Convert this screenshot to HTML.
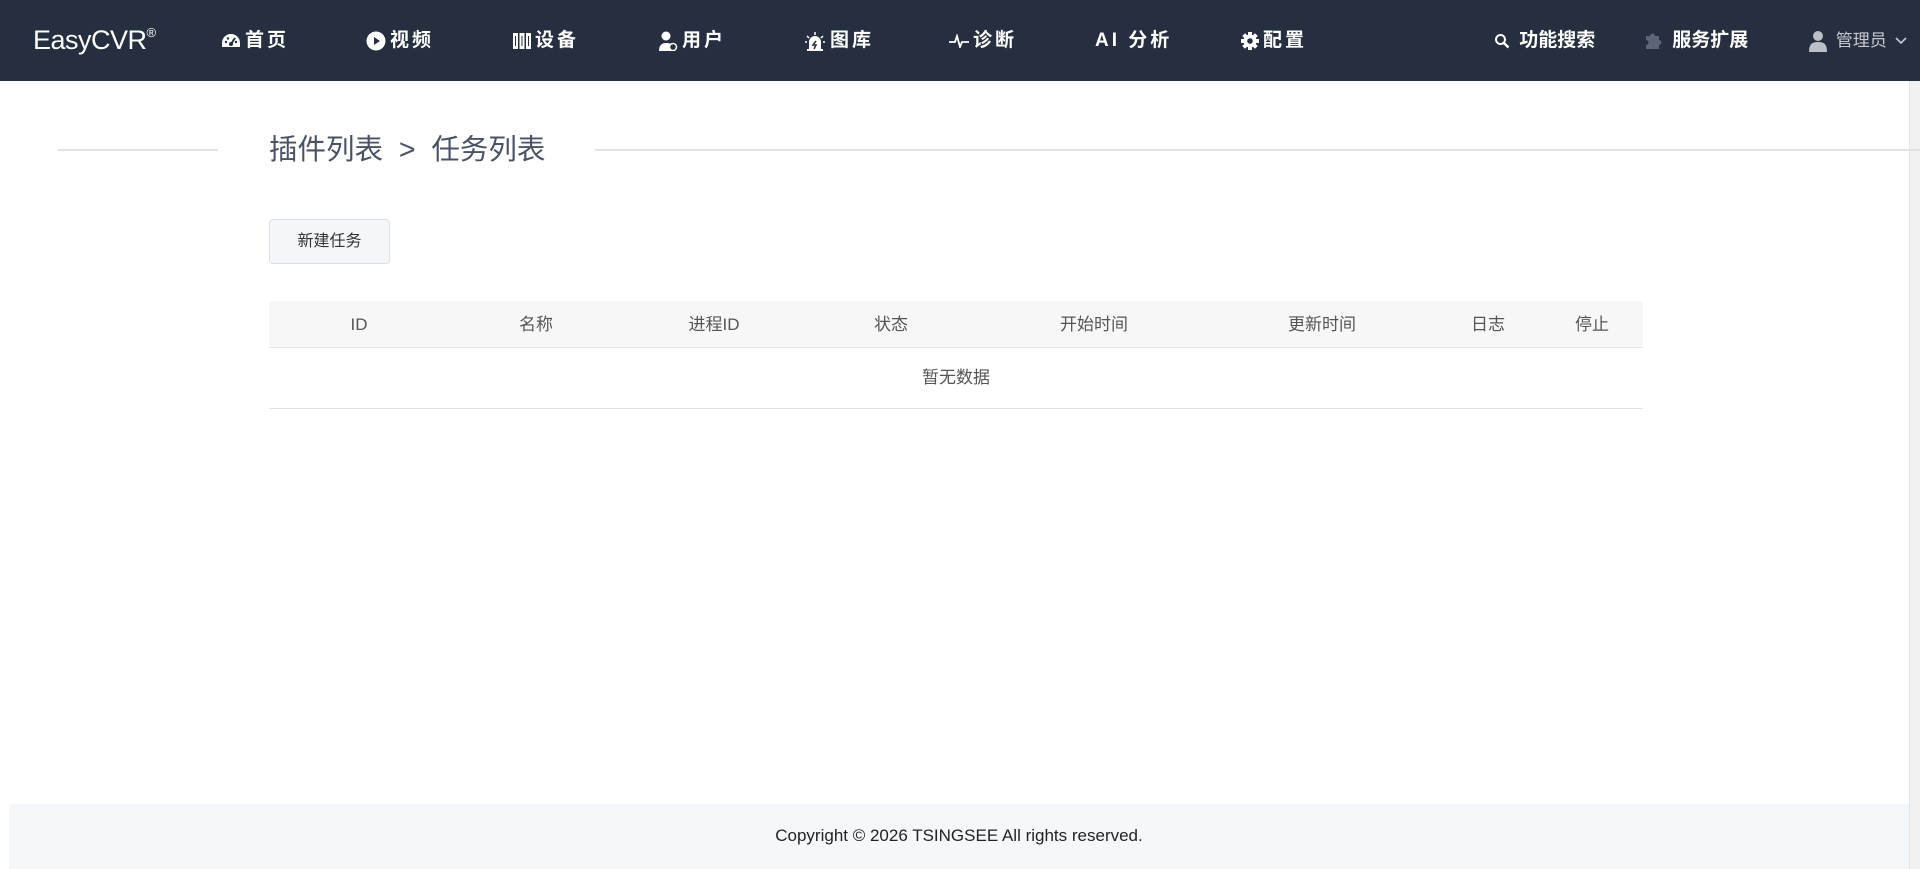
<!DOCTYPE html>
<html><head><meta charset="utf-8"><style>
*{margin:0;padding:0;box-sizing:border-box}
body{width:1920px;height:869px;background:#fff;font-family:"Liberation Sans","Noto Sans CJK SC",sans-serif;position:relative;overflow:hidden}
.hd{position:absolute;left:0;top:0;width:1920px;height:81px;background:#262f3f;color:#fff}
.hd .a{position:absolute;top:0;height:81px;line-height:81px;font-size:19px;font-weight:bold;white-space:nowrap;display:flex;align-items:center;gap:4px;letter-spacing:3px}
.logo{position:absolute;left:33px;top:0;line-height:81px;font-size:27px;color:#fff;letter-spacing:-0.5px}
.logo sup{font-size:13px;vertical-align:top;position:relative;top:-8px}
svg{display:block}
.sb{position:absolute;right:0;top:81px;width:11px;height:788px;background:#f1f1f1;border-left:1px solid #e6e6e6}
.bc{position:absolute;left:269px;top:130px;font-size:28.5px;color:#4a5366;line-height:40px;white-space:nowrap}
.ln{position:absolute;top:149px;height:2px;background:#e2e2e2}
.btn{position:absolute;left:269px;top:219px;width:121px;height:45px;border:1px solid #dcdfe6;border-radius:4px;background:#f4f6f9;font-size:16px;color:#333;text-align:center;line-height:43px}
.th{position:absolute;left:269px;top:301px;width:1374px;height:47px;background:#f7f7f7;border-bottom:1px solid #e6e6e6}
.th span{position:absolute;top:0;line-height:47px;font-size:17px;color:#555;transform:translateX(-50%);white-space:nowrap}
.em{position:absolute;left:269px;top:348px;width:1374px;height:61px;border-bottom:1px solid #e2e2e2;text-align:center;line-height:60px;font-size:17px;color:#555}
.ft{position:absolute;left:9px;top:804px;width:1900px;height:65px;background:#f5f8fb;text-align:center;line-height:64px;font-size:17px;color:#222}
</style></head><body>
<div class="hd">
<div class="logo">EasyCVR<sup>®</sup></div>
<div class="a" style="left:221px"><svg width="20" height="16" viewBox="0 0 20 16"><path d="M10 1A9 9 0 0 0 1 10v4h18v-4A9 9 0 0 0 10 1z" fill="#fff"/><circle cx="10" cy="11" r="2" fill="#262f3f"/><path d="M10 11L14 5" stroke="#262f3f" stroke-width="2"/><circle cx="5" cy="9" r="1.2" fill="#262f3f"/><circle cx="7" cy="5.5" r="1.2" fill="#262f3f"/><circle cx="15" cy="9" r="1.2" fill="#262f3f"/></svg>首页</div>
<div class="a" style="left:366px"><svg width="20" height="20" viewBox="0 0 20 20"><circle cx="10" cy="10" r="9.5" fill="#fff"/><path d="M8 6v8l6-4z" fill="#262f3f"/></svg>视频</div>
<div class="a" style="left:513px"><svg width="18" height="16" viewBox="0 0 18 16"><rect x="0" y="0" width="5" height="16" fill="#fff"/><rect x="6.5" y="0" width="5" height="16" fill="#fff"/><rect x="13" y="0" width="5" height="16" fill="#fff"/><rect x="2" y="3" width="1" height="10" fill="#262f3f"/><rect x="8.5" y="3" width="1" height="10" fill="#262f3f"/><rect x="15" y="3" width="1" height="10" fill="#262f3f"/></svg>设备</div>
<div class="a" style="left:658px"><svg width="20" height="20" viewBox="0 0 20 20"><circle cx="8" cy="5" r="4.5" fill="#fff"/><path d="M1 20c0-6 3-8 7-8s5 1 6 2v6z" fill="#fff"/><circle cx="15" cy="16" r="3.5" fill="#262f3f" stroke="#fff" stroke-width="1.5"/></svg>用户</div>
<div class="a" style="left:804px"><svg width="22" height="20" viewBox="0 0 22 20"><path d="M5 19V11a6 6 0 0 1 12 0v8z" fill="#fff"/><rect x="3" y="18" width="16" height="2" fill="#fff"/><path d="M11 1v3M3 5l2 2M19 5l-2 2M1 11h2M19 11h2" stroke="#fff" stroke-width="1.5"/><path d="M12 10l-3 4h3l-2 4" stroke="#262f3f" stroke-width="1.5" fill="none"/></svg>图库</div>
<div class="a" style="left:949px"><svg width="20" height="14" viewBox="0 0 20 14"><path d="M0 8h6l2-6 3 11 2-5h7" stroke="#fff" stroke-width="1.8" fill="none"/></svg>诊断</div>
<div class="a" style="left:1095px">AI&nbsp;分析</div>
<div class="a" style="left:1241px"><svg width="18" height="18" viewBox="0 0 18 18"><g fill="#fff"><circle cx="9" cy="9" r="6.5"/><rect x="7" y="0" width="4" height="18"/><rect x="0" y="7" width="18" height="4"/><rect x="7" y="0" width="4" height="18" transform="rotate(45 9 9)"/><rect x="7" y="0" width="4" height="18" transform="rotate(-45 9 9)"/></g><circle cx="9" cy="9" r="2.8" fill="#262f3f"/></svg>配置</div>
<div class="a" style="left:1494px;letter-spacing:0"><svg width="16" height="16" viewBox="0 0 16 16"><circle cx="6.5" cy="6.5" r="4.5" stroke="#fff" stroke-width="2" fill="none"/><path d="M10 10l4.5 4.5" stroke="#fff" stroke-width="2.4"/></svg>&nbsp;功能搜索</div>
<div class="a" style="left:1643px;letter-spacing:0"><svg width="20" height="18" viewBox="0 0 20 18"><path d="M3 4h4a2.5 2.5 0 1 1 5 0h4v4a2.5 2.5 0 1 1 0 5v4H3v-4a2.5 2.5 0 1 0 0-5z" fill="#5b6478"/></svg>&nbsp;服务扩展</div>
<div class="a" style="left:1809px;letter-spacing:0;font-weight:normal;font-size:17px;color:#c6c9cf"><svg width="18" height="22" viewBox="0 0 18 22"><circle cx="9" cy="6" r="5" fill="#bbbfc6"/><path d="M0 22c0-8 3-10 9-10s9 2 9 10z" fill="#bbbfc6"/></svg>&nbsp;管理员&nbsp;<svg width="12" height="8" viewBox="0 0 12 8"><path d="M1 1l5 5 5-5" stroke="#c6c9cf" stroke-width="1.6" fill="none"/></svg></div>
</div>
<div class="sb"></div>
<div class="ln" style="left:58px;width:160px"></div>
<div class="bc">插件列表&nbsp;&nbsp;&gt;&nbsp;&nbsp;任务列表</div>
<div class="ln" style="left:595px;width:1325px"></div>
<div class="btn">新建任务</div>
<div class="th">
<span style="left:90px">ID</span><span style="left:267px">名称</span><span style="left:445px">进程ID</span><span style="left:622px">状态</span><span style="left:825px">开始时间</span><span style="left:1053px">更新时间</span><span style="left:1219px">日志</span><span style="left:1323px">停止</span>
</div>
<div class="em">暂无数据</div>
<div class="ft">Copyright © 2026 TSINGSEE All rights reserved.</div>
</body></html>
